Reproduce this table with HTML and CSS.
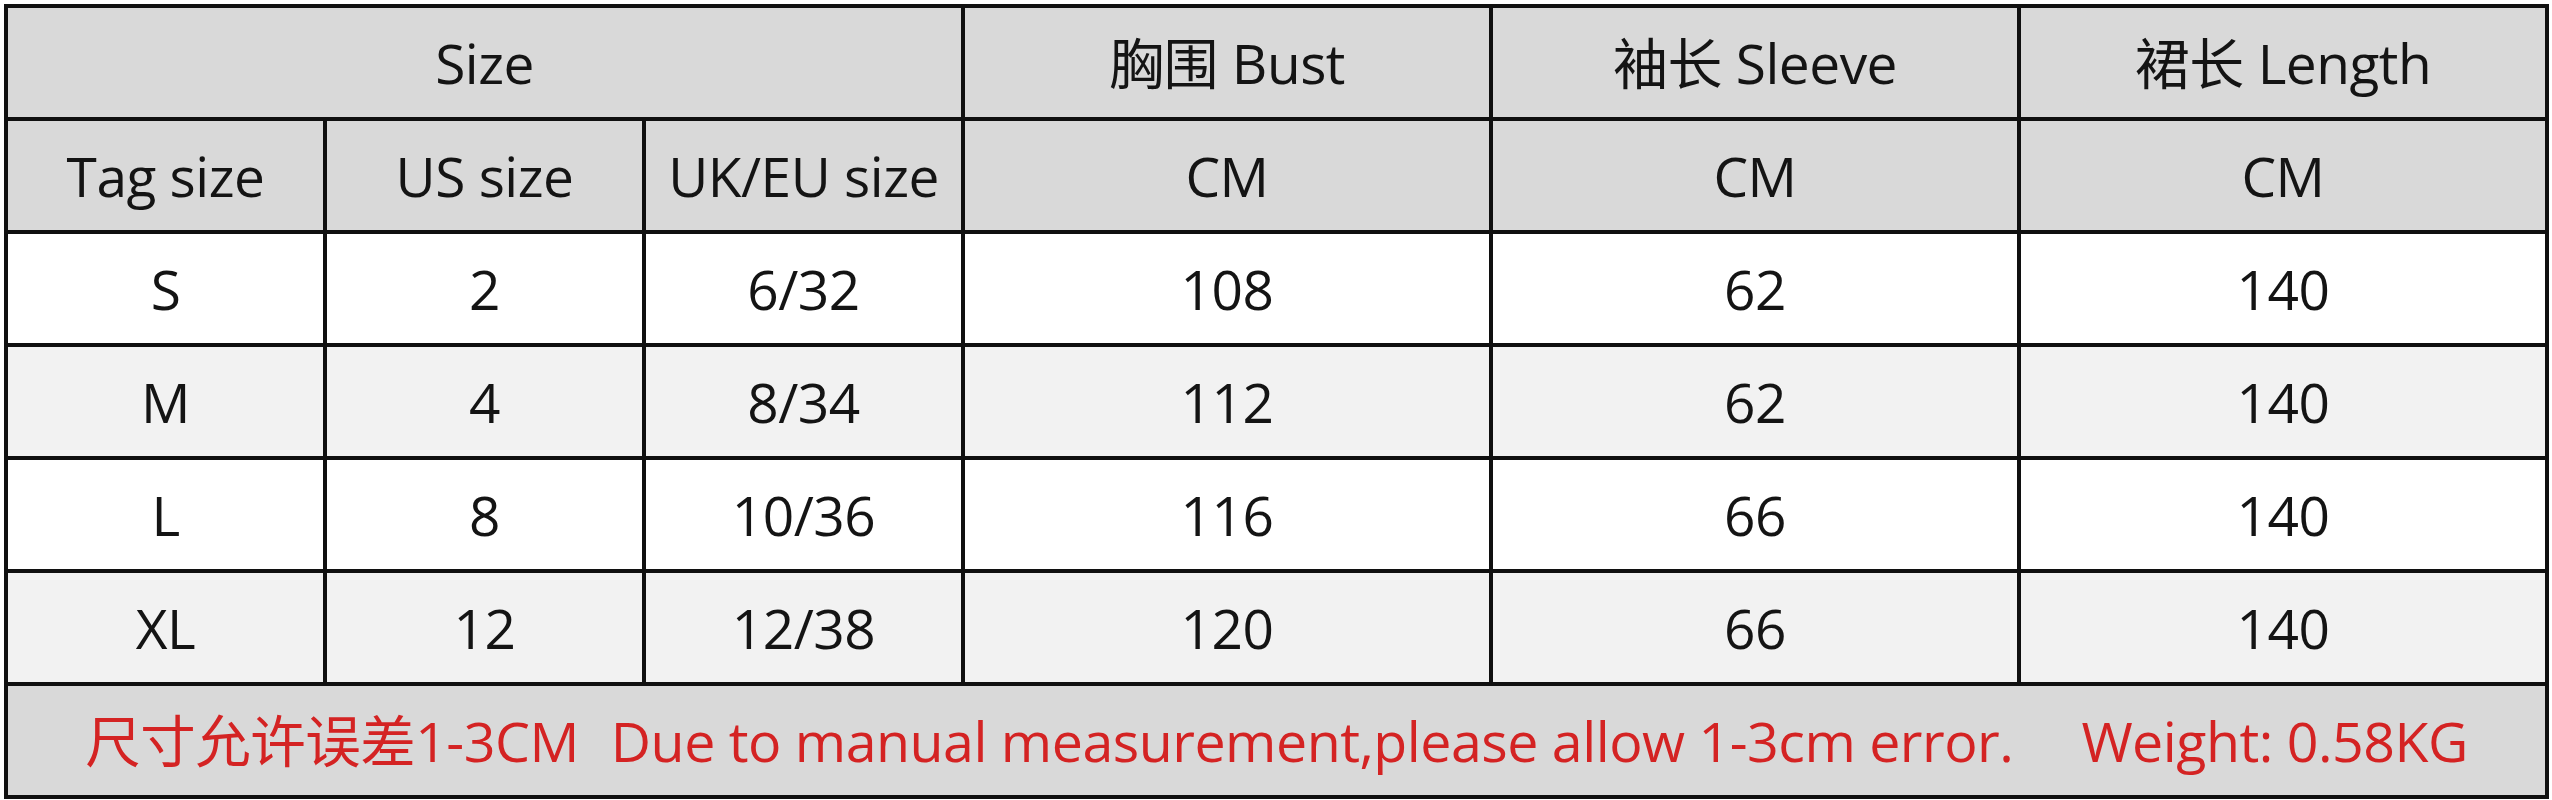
FILE: index.html
```html
<!DOCTYPE html>
<html lang="zh">
<head>
<meta charset="utf-8">
<title>Size chart</title>
<link rel="stylesheet" href="styles.css">
</head>
<body>
<div class="page">
<table class="chart">
  <colgroup>
    <col class="c-small"><col class="c-small"><col class="c-small">
    <col class="c-wide"><col class="c-wide"><col class="c-wide">
  </colgroup>
  <tr class="head">
    <td colspan="3">Size</td>
    <td>胸围 Bust</td>
    <td>袖长 Sleeve</td>
    <td>裙长 Length</td>
  </tr>
  <tr class="head">
    <td>Tag size</td>
    <td>US size</td>
    <td>UK/EU size</td>
    <td>CM</td>
    <td>CM</td>
    <td>CM</td>
  </tr>
  <tr class="odd"><td>S</td><td>2</td><td>6/32</td><td>108</td><td>62</td><td>140</td></tr>
  <tr class="even"><td>M</td><td>4</td><td>8/34</td><td>112</td><td>62</td><td>140</td></tr>
  <tr class="odd"><td>L</td><td>8</td><td>10/36</td><td>116</td><td>66</td><td>140</td></tr>
  <tr class="even"><td>XL</td><td>12</td><td>12/38</td><td>120</td><td>66</td><td>140</td></tr>
  <tr class="foot">
    <td colspan="6"><span class="note">尺寸允许误差1-3CM</span><span class="note gap1">Due to manual measurement,please allow 1-3cm error.</span><span class="note gap2">Weight: 0.58KG</span></td>
  </tr>
</table>
</div>
</body>
</html>
```

FILE: styles.css
```css
html, body {
  margin: 0;
  padding: 0;
  background: #ffffff;
}

.page {
  padding: 4px 0 0 4px;
}

.chart {
  border-collapse: collapse;
  table-layout: fixed;
  width: 2542px;
  font-family: "Open Sans", "Noto Sans CJK SC", sans-serif;
  font-size: 55px;
  color: #141414;
  letter-spacing: -0.5px;
}

.c-small { width: 319px; }
.c-wide { width: 528px; }

.chart td {
  border: 4px solid #101010;
  height: 109px;
  padding: 0;
  text-align: center;
  vertical-align: middle;
  line-height: 1;
}

.head td {
  background: #d9d9d9;
}

.odd td {
  background: #ffffff;
}

.even td {
  background: #f2f2f2;
}

.foot td {
  background: #d9d9d9;
  color: #d42323;
  white-space: nowrap;
  font-size: 55.5px;
}

.gap1 {
  margin-left: 32px;
}

.gap2 {
  margin-left: 68px;
}
```
